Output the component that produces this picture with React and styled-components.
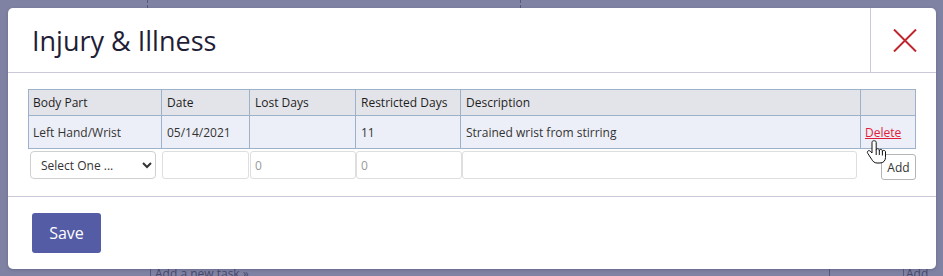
import React from 'react';
import styled, { createGlobalStyle } from 'styled-components';

const GlobalStyle = createGlobalStyle`
  html, body {
    margin: 0;
    padding: 0;
    background: #7f82a3;
    font-family: "Open Sans", "Liberation Sans", sans-serif;
  }
`;

const Screen = styled.div`
  position: relative;
  width: 943px;
  height: 276px;
  overflow: hidden;
  background: #7f82a3;
  display: flex;
  flex-direction: column;
  justify-content: space-between;
`;

const TopStrip = styled.div`
  display: grid;
  grid-template-columns: 147px 373px 1fr;
  height: 8px;
`;

const BottomStrip = styled.div`
  display: grid;
  grid-template-columns: 150px 679px 74px 1fr;
  height: 7px;
  overflow: hidden;
`;

const BackCell = styled.div`
  border-left: ${p => p.line ? `1px ${p.line} #56597c` : 'none'};
  color: #45486a;
  font-size: 12px;
  line-height: 12px;
  padding-left: ${p => p.pad || 0}px;
  white-space: nowrap;

  span {
    display: block;
    margin-top: -1px;
  }
`;

const Modal = styled.div`
  position: absolute;
  top: 8px;
  left: 8px;
  width: 928px;
  height: 261px;
  background: #fff;
  border-radius: 5px;
  box-shadow: 0 1px 3px rgba(40, 40, 70, 0.25);
  display: flex;
  flex-direction: column;
`;

const Header = styled.div`
  display: flex;
  height: 64px;
  border-bottom: 1px solid #cac8da;
`;

const Title = styled.h4`
  flex: 1;
  margin: 0;
  padding-left: 24px;
  display: flex;
  align-items: center;
  font-size: 27px;
  font-weight: 400;
  color: #1f1e37;
`;

const Close = styled.button`
  width: 66px;
  border: none;
  border-left: 1px solid #cac8da;
  background: transparent;
  display: flex;
  align-items: center;
  justify-content: center;
  padding: 0 0 0 2px;
  cursor: pointer;
`;

const Body = styled.div`
  padding: 16px 20px 0;
  height: 107px;
  border-bottom: 1px solid #cac8da;
`;

const Grid = styled.div`
  display: grid;
  grid-template-columns: 133px 88px 106px 105px 400px 55px;
  border-top: 1px solid #9db2c9;
  border-left: 1px solid #9db2c9;
`;

const Cell = styled.div`
  height: ${p => p.head ? 25 : 32}px;
  border-right: 1px solid #9db2c9;
  border-bottom: 1px solid #9db2c9;
  background: ${p => p.head ? '#e3e4e9' : '#edeff8'};
  padding-left: 5px;
  display: flex;
  align-items: center;
  font-size: 12px;
  font-weight: 400;
  color: ${p => p.head ? '#1e1e1e' : '#333'};
  white-space: nowrap;
  position: relative;
  &:nth-child(6n+1) {
    padding-left: 4px;
  }
`;

const DeleteLink = styled.a`
  color: #e11d3b;
  text-decoration: underline;
  font-size: 12px;
  margin-left: -1px;
  cursor: pointer;
`;

const Pointer = styled.svg`
  position: absolute;
  left: 5px;
  top: 24px;
  z-index: 3;
`;

const EntryRow = styled.div`
  display: grid;
  grid-template-columns: 134px 88px 106px 105px 400px 55px;
  margin-top: 2px;
  align-items: start;
`;

const Select = styled.select`
  margin-left: 2px;
  width: 126px;
  height: 28px;
  border: 1px solid #cfcfcf;
  border-radius: 4px;
  background: #fff;
  font-family: inherit;
  font-size: 12px;
  color: #333;
  padding-left: 6px;
`;

const Field = styled.input`
  box-sizing: border-box;
  width: ${p => p.w}px;
  margin-left: ${p => p.ml || 0}px;
  height: 28px;
  border: 1px solid #dedede;
  border-radius: 3px;
  font-family: inherit;
  font-size: 12px;
  padding: 0 4px;
  color: #333;
  &::placeholder {
    color: #999;
  }
`;

const AddButton = styled.button`
  justify-self: end;
  margin-top: 3px;
  width: 35px;
  height: 26px;
  padding: 0;
  border: 1px solid #b5b5b5;
  border-radius: 3px;
  background: #fff;
  font-family: inherit;
  font-size: 12px;
  color: #333;
`;

const Footer = styled.div`
  padding: 16px 24px;
`;

const SaveButton = styled.button`
  width: 69px;
  height: 40px;
  border: none;
  border-radius: 3px;
  background: #545ca5;
  color: #fff;
  font-family: inherit;
  font-size: 16px;
  font-weight: 500;
`;

const heads = ['Body Part', 'Date', 'Lost Days', 'Restricted Days', 'Description', ''];
const rows = [['Left Hand/Wrist', '05/14/2021', '', '11', 'Strained wrist from stirring']];

export default function App() {
  return (
    <>
      <GlobalStyle />
      <Screen>
        <TopStrip>
          <BackCell />
          <BackCell line="dashed" />
          <BackCell line="dashed" />
        </TopStrip>
        <BottomStrip>
          <BackCell />
          <BackCell line="solid" pad={4}><span>Add a new task »</span></BackCell>
          <BackCell line="solid" />
          <BackCell line="solid" pad={2}><span>Add</span></BackCell>
        </BottomStrip>

        <Modal>
          <Header>
            <Title>Injury &amp; Illness</Title>
            <Close aria-label="close">
              <svg width="24" height="23" viewBox="0 0 24 23">
                <path d="M1 0.5 L23 22.5 M23 0.5 L1 22.5" stroke="#c0262d" strokeWidth="2" fill="none" />
              </svg>
            </Close>
          </Header>

          <Body>
            <Grid>
              {heads.map((h, i) => <Cell head key={i}>{h}</Cell>)}
              {rows.map((r, ri) => (
                <React.Fragment key={ri}>
                  {r.map((c, ci) => <Cell key={ci}>{c}</Cell>)}
                  <Cell>
                    <DeleteLink>Delete</DeleteLink>
                    <Pointer width="21" height="24" viewBox="0 0 21 24">
                      <path
                        d="M7.5 0.8 C6.6 0.8 6 1.5 6 2.4 V13 L4.3 11.2 C3.6 10.5 2.5 10.5 1.8 11.1 C1.2 11.7 1.2 12.6 1.7 13.3 L5.6 19.2 C6.8 21.4 8.4 23 11 23 H14 C17.2 23 19.5 20.8 19.5 17.6 V12 C19.5 11.1 18.8 10.4 17.9 10.4 C17 10.4 16.4 11.1 16.4 12 V11 C16.4 10.1 15.7 9.4 14.8 9.4 C13.9 9.4 13.3 10.1 13.3 11 V10.3 C13.3 9.4 12.6 8.7 11.7 8.7 C10.8 8.7 10.2 9.4 10.2 10.3 V2.4 C10.2 1.5 9.5 0.8 8.6 0.8 Z"
                        fill="#fff" stroke="#111" strokeWidth="1"
                      />
                      <path d="M10.2 10.3 V15 M13.3 11 V15 M16.4 12 V15.5" stroke="#111" strokeWidth="1" fill="none" />
                    </Pointer>
                  </Cell>
                </React.Fragment>
              ))}
            </Grid>

            <EntryRow>
              <div>
                <Select defaultValue="">
                  <option value="">Select One ...</option>
                </Select>
              </div>
              <Field w={87} />
              <Field w={106} placeholder="0" />
              <Field w={106} placeholder="0" />
              <Field w={395} ml={1} />
              <AddButton>Add</AddButton>
            </EntryRow>
          </Body>

          <Footer>
            <SaveButton>Save</SaveButton>
          </Footer>
        </Modal>
      </Screen>
    </>
  );
}
